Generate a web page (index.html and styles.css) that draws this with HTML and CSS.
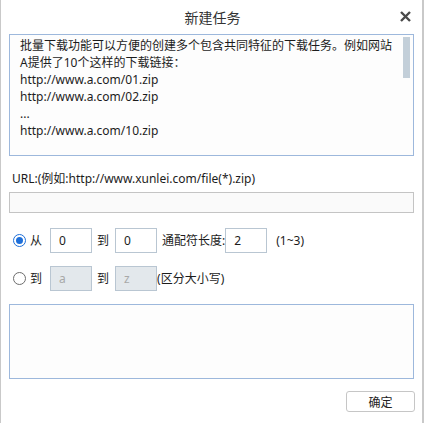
FILE: index.html
```html
<!DOCTYPE html>
<html lang="zh-CN">
<head>
<meta charset="utf-8">
<link rel="stylesheet" href="styles.css">
</head>
<body>
<div class="dialog">
  <div class="titlebar">
    <span class="title">新建任务</span>
    <span class="close"><svg width="11" height="11" viewBox="0 0 11 11"><path d="M1 1 L10 10 M10 1 L1 10" stroke="#4a4a4a" stroke-width="2.4" fill="none"/></svg></span>
  </div>
  <div class="memo">
    <div class="memo-text">批量下载功能可以方便的创建多个包含共同特征的下载任务。例如网站A提供了10个这样的下载链接：<br>http://www.a.com/01.zip<br>http://www.a.com/02.zip<br>...<br>http://www.a.com/10.zip</div>
    <div class="scroll-thumb"></div>
  </div>
  <div class="label">URL:(例如:http://www.xunlei.com/file(*).zip)</div>
  <div class="url-input"></div>
  <div class="row row-first">
    <span class="radio checked"></span>
    <span class="word">从</span>
    <span class="box">0</span>
    <span class="word word-mid">到</span>
    <span class="box">0</span>
    <span class="word word-len">通配符长度:</span>
    <span class="box">2</span>
    <span class="word word-range">(1~3)</span>
  </div>
  <div class="row row-second">
    <span class="radio"></span>
    <span class="word">到</span>
    <span class="box disabled">a</span>
    <span class="word word-mid">到</span>
    <span class="box disabled">z</span>
    <span class="word word-case">(区分大小写)</span>
  </div>
  <div class="result"></div>
  <div class="actions">
    <span class="btn">确定</span>
  </div>
</div>
</body>
</html>
```
FILE: styles.css
```css
html, body {
  margin: 0;
  padding: 0;
  background: #ffffff;
}
.dialog {
  width: 424px;
  height: 423px;
  box-sizing: border-box;
  border-left: 1px solid #c9c9c9;
  border-right: 2px solid #c9c9c9;
  padding: 0 8px 0 8px;
  font-family: "Noto Sans", "Noto Sans CJK SC", sans-serif;
  font-size: 12px;
  color: #1c1c1c;
  background: #fff;
}
.titlebar {
  height: 34px;
  display: flex;
  align-items: center;
  justify-content: center;
  position: relative;
}
.title {
  font-size: 14px;
  color: #333;
  font-family: "Noto Sans CJK SC", sans-serif;
  margin-left: 2px;
}
.close {
  position: absolute;
  right: 3px;
  top: 11px;
  width: 11px;
  height: 11px;
  display: block;
  line-height: 0;
}
.memo {
  position: relative;
  height: 122px;
  box-sizing: border-box;
  border: 1px solid #9db8dc;
  background: #fdfdfd;
  padding: 2px 20px 0 10px;
}
.memo-text {
  line-height: 17px;
  font-size: 12px;
}
.scroll-thumb {
  position: absolute;
  right: 3px;
  top: 2px;
  width: 7px;
  height: 41px;
  background: #c3cfd9;
}
.label {
  margin-top: 14px;
  line-height: 17px;
  padding-left: 3px;
}
.url-input {
  margin-top: 5px;
  height: 21px;
  box-sizing: border-box;
  border: 1px solid #c4c4c4;
  background: #fafafa;
}
.row {
  display: flex;
  align-items: center;
  height: 25px;
  padding-left: 4px;
}
.row-first { margin-top: 15px; }
.row-second { margin-top: 13px; }
.radio {
  width: 13px;
  height: 13px;
  box-sizing: border-box;
  border: 1px solid #6d6d6d;
  border-radius: 50%;
  background: #fff;
  display: flex;
  align-items: center;
  justify-content: center;
}
.radio.checked {
  border-color: #1e6fd9;
}
.radio.checked::after {
  content: "";
  width: 7px;
  height: 7px;
  border-radius: 50%;
  background: #1e6fd9;
}
.word {
  margin-left: 4px;
  margin-right: 8px;
  line-height: 17px;
}
.word-mid { margin-left: 5px; margin-right: 6px; }
.word-len { margin-left: 5px; margin-right: 0; }
.word-range { margin-left: 9px; }
.word-case { margin-left: 0; }
.box {
  width: 42px;
  height: 25px;
  box-sizing: border-box;
  border: 1px solid #b9c6d2;
  background: #fff;
  padding-left: 8px;
  line-height: 23px;
}
.box.disabled {
  background: #e3e8ec;
  color: #a8a8a8;
}
.result {
  margin-top: 13px;
  height: 75px;
  box-sizing: border-box;
  border: 1px solid #9db8dc;
  background: #fdfdfd;
}
.actions {
  display: flex;
  justify-content: flex-end;
  margin-top: 12px;
  margin-right: -1px;
}
.btn {
  width: 69px;
  height: 21px;
  box-sizing: border-box;
  border: 1px solid #c6c6c6;
  border-radius: 3px;
  background: #fff;
  display: flex;
  align-items: center;
  justify-content: center;
  font-family: "Noto Sans CJK SC", sans-serif;
  font-size: 12px;
  color: #222;
}
```
